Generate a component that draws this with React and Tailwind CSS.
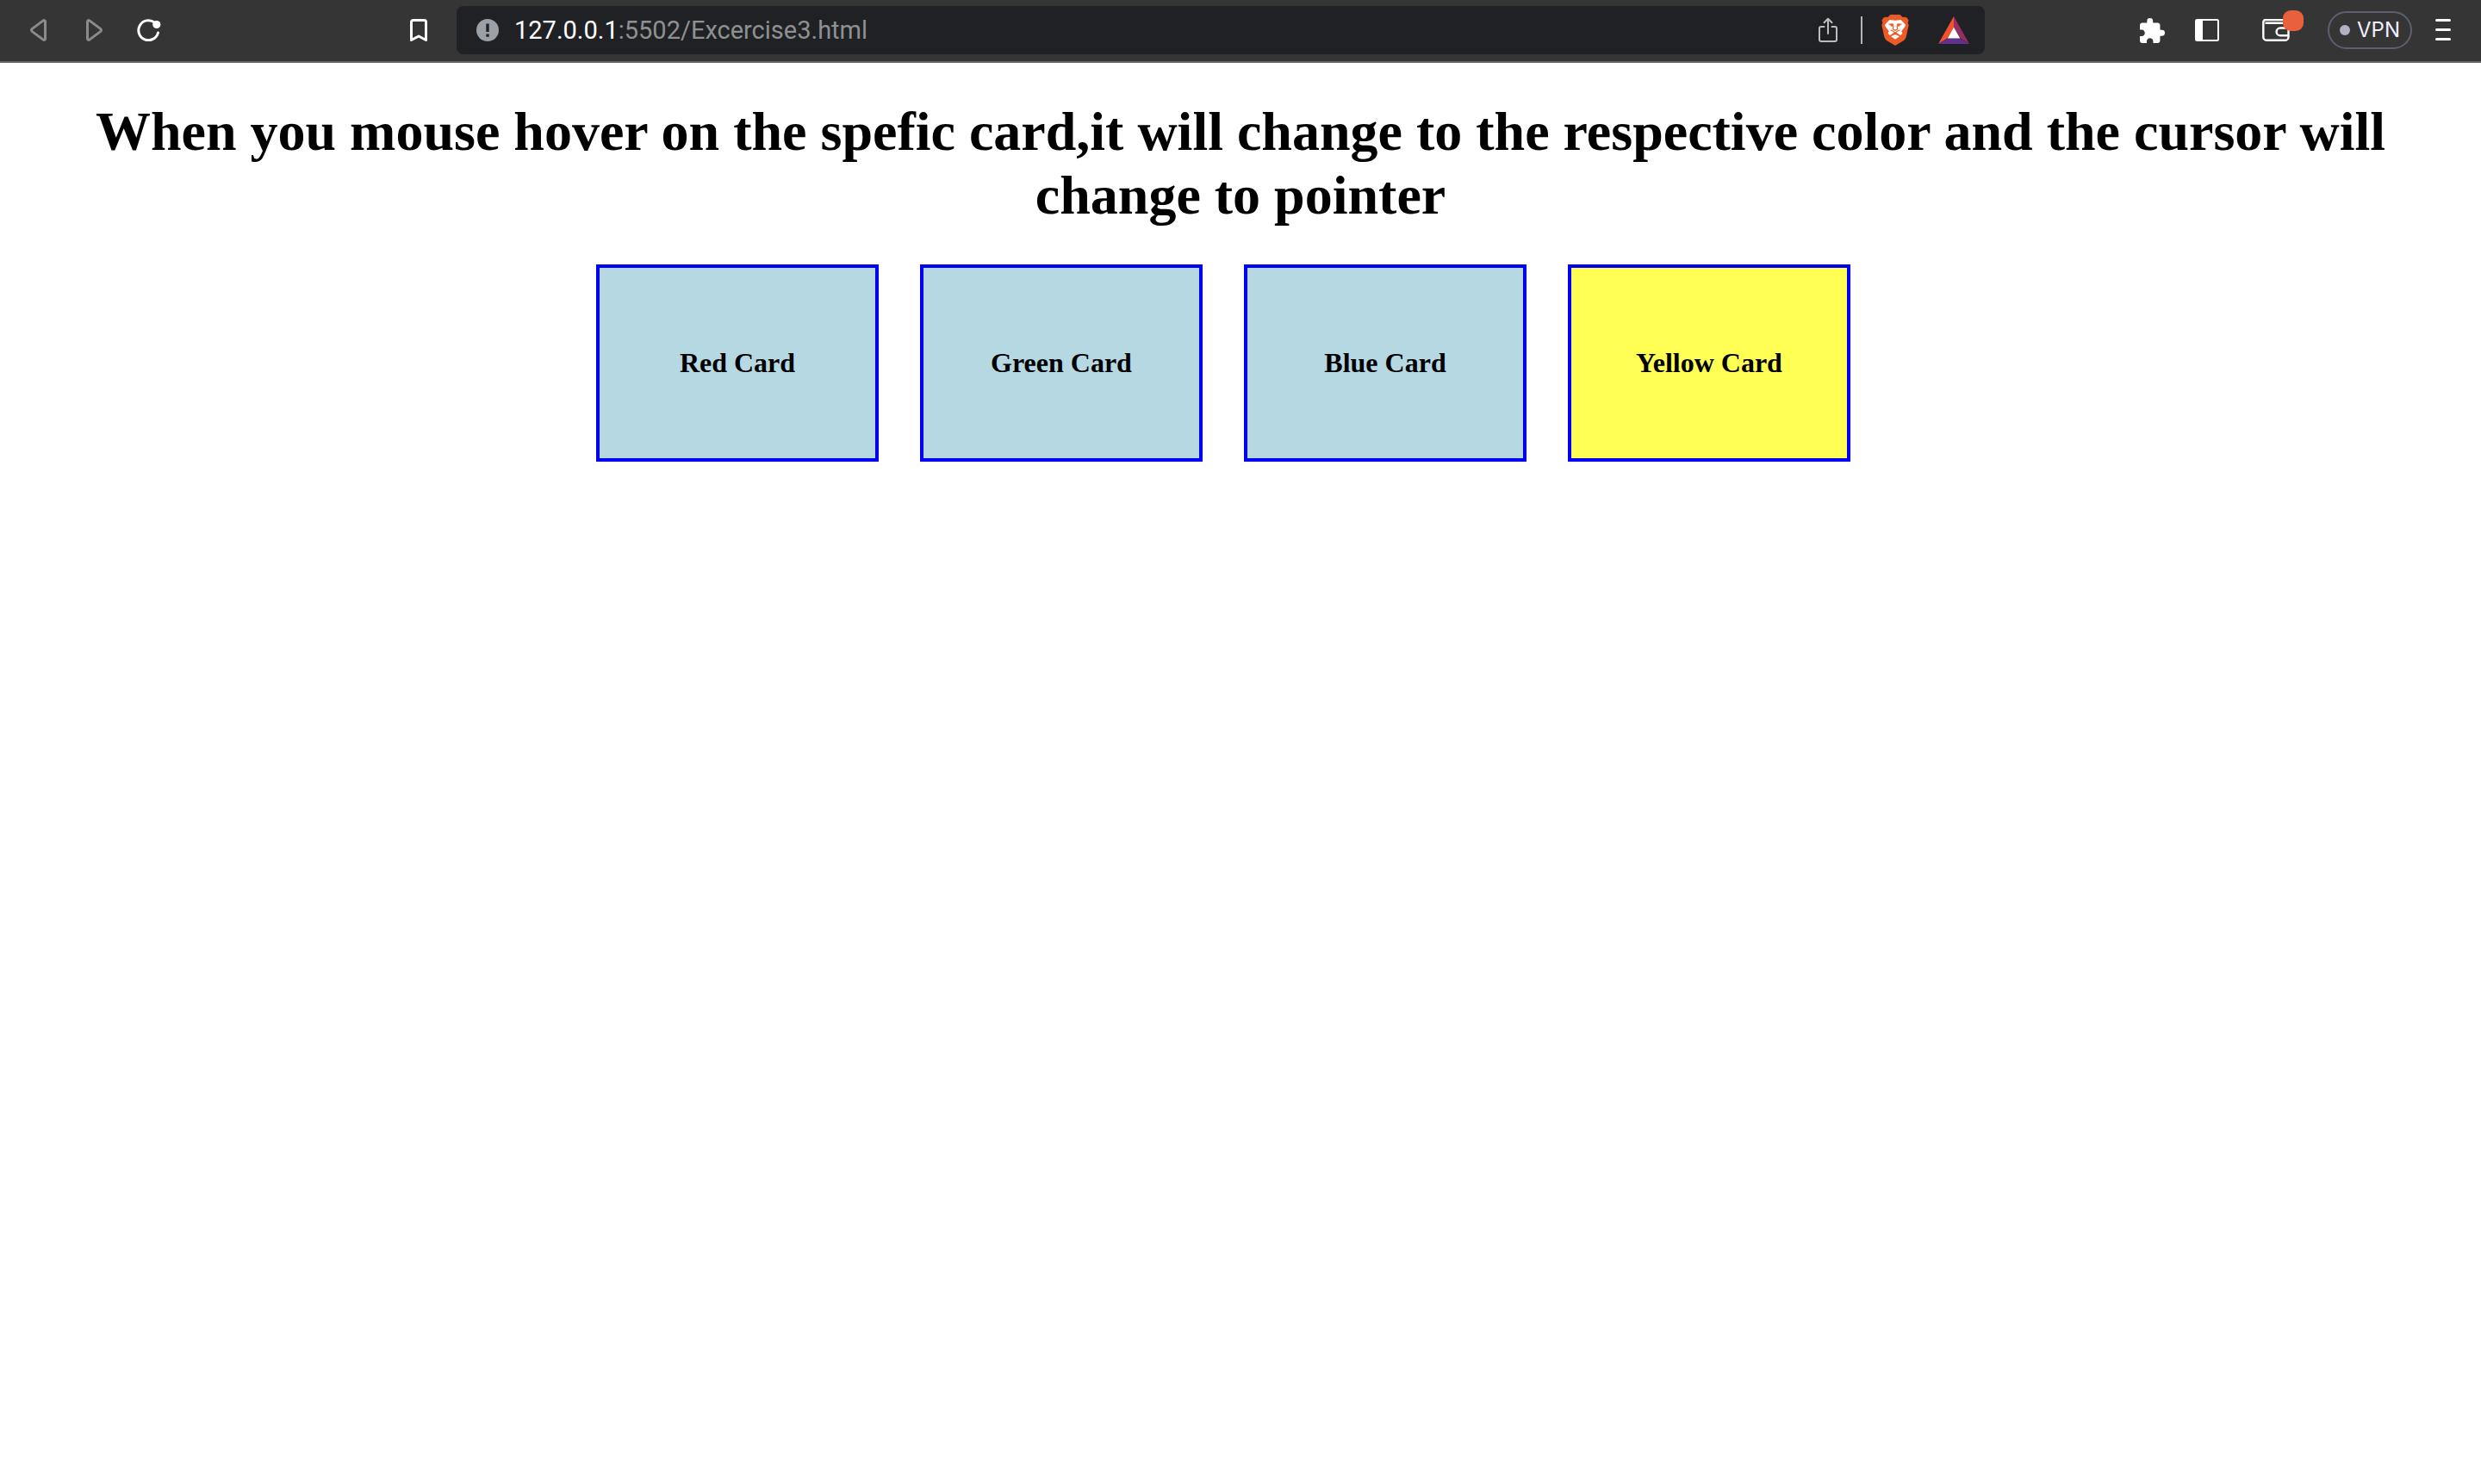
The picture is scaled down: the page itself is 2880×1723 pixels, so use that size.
const cards = [
  { name: "Red Card", tone: "bg-[#b6d8e3] hover:bg-red-500" },
  { name: "Green Card", tone: "bg-[#b6d8e3] hover:bg-green-500" },
  { name: "Blue Card", tone: "bg-[#b6d8e3] hover:bg-blue-500" },
  { name: "Yellow Card", tone: "bg-[#ffff54]" },
];

function BarButton({ label, className = "w-16", children }) {
  return (
    <button
      type="button"
      aria-label={label}
      className={"flex h-14 shrink-0 cursor-pointer items-center justify-center " + className}
    >
      {children}
    </button>
  );
}

function BackIcon() {
  return (
    <svg width="20" height="26" viewBox="0 0 20 26" fill="none" stroke="#8b8b8b" strokeWidth="3" strokeLinejoin="round">
      <path d="M17.5 3.2v19.6c0 1.400-1.200 2.100-2.300 1.300L2.400 14.600c-1.200-.9-1.200-2.300 0-3.200L15.200 1.900c1.100-.8 2.300-.1 2.300 1.300z" />
    </svg>
  );
}

function ForwardIcon() {
  return (
    <svg width="20" height="26" viewBox="0 0 20 26" fill="none" stroke="#8b8b8b" strokeWidth="3" strokeLinejoin="round">
      <path d="M2.500 3.200v19.600c0 1.400 1.200 2.100 2.300 1.300l12.800-9.500c1.200-.9 1.200-2.300 0-3.200L4.800 1.900C3.700 1.100 2.500 1.800 2.500 3.200z" />
    </svg>
  );
}

function ReloadIcon() {
  return (
    <svg width="28" height="26" viewBox="0 0 28 26" fill="none">
      <path d="M20.500 4.200A11.500 11.500 0 1 0 24.500 16" stroke="#fff" strokeWidth="3" strokeLinecap="round" />
      <circle cx="22.800" cy="6.500" r="4.600" fill="#fff" />
    </svg>
  );
}

function BookmarkIcon() {
  return (
    <svg width="20" height="26" viewBox="0 0 20 26" fill="none" stroke="#fff" strokeWidth="3" strokeLinejoin="round">
      <path d="M1.500 24.500V3.500a2 2 0 0 1 2-2h13a2 2 0 0 1 2 2v21L10 20z" />
    </svg>
  );
}

function InfoIcon() {
  return (
    <svg width="26" height="26" viewBox="0 0 26 26">
      <circle cx="13" cy="13" r="13" fill="#9aa0a6" />
      <path d="M11.300 5.500h3.400v9.500h-3.400zM11.300 17.500h3.400v3.200h-3.400z" fill="#202124" />
    </svg>
  );
}

function ShareIcon() {
  return (
    <svg width="22" height="30" viewBox="0 0 22 30" fill="none" stroke="#bdbdbd" strokeWidth="2" strokeLinecap="round" strokeLinejoin="round">
      <path d="M6.500 11H3a2 2 0 0 0-2 2v13a2 2 0 0 0 2 2h16a2 2 0 0 0 2-2V13a2 2 0 0 0-2-2h-3.500" />
      <path d="M11 19V2M6.500 6.300 11 1.800l4.500 4.500" />
    </svg>
  );
}

function LionIcon() {
  return (
    <svg width="32" height="36" viewBox="0 0 96 108">
      <path
        d="M31 0H65L74 9Q84 6 89 11L95 20L92 28L95 37L86 78Q84 86 78 90L48 108L18 90Q12 86 10 78L1 37L4 28L1 20L7 11Q12 6 22 9Z"
        fill="#ec5a25"
      />
      <path
        d="M28 18L48 20L68 18L84 35L82 42L70 57L73 66L66 72L54 64L48 61L42 64L30 72L23 66L26 57L14 42L12 35Z"
        fill="#fff"
      />
      <path d="M48 69L63 76L48 86L33 76Z" fill="#fff" />
      <path d="M23 32l17-1 3 4-3 5-5 2-2-4zM73 32l-17-1-3 4 3 5 5 2 2-4z" fill="#ec5a25" />
      <path d="M42 38l-2 12 8 5 8-5-2-12M32 54l8 3 8 7 8-7 8-3M48 62v7" fill="none" stroke="#ec5a25" strokeWidth="3.500" />
    </svg>
  );
}

function TriangleIcon() {
  return (
    <svg width="36" height="32" viewBox="0 0 36 32">
      <path d="M18 0v12.500L11 25 0 32z" fill="#f4512c" />
      <path d="M18 0v12.500L25 25l11 7z" fill="#962d64" />
      <path d="M0 32l11-6.500h14L36 32z" fill="#63308f" />
      <path d="M18 12.500L25.200 25.600H10.800z" fill="#fff" />
    </svg>
  );
}

function PuzzleIcon() {
  return (
    <svg width="29" height="29" viewBox="2 1 21 21" fill="#fff">
      <path d="M20.500 11H19V7c0-1.100-.9-2-2-2h-4V3.500a2.500 2.500 0 0 0-5 0V5H4c-1.100 0-1.990.9-1.990 2v3.800H3.500c1.490 0 2.700 1.210 2.700 2.700s-1.210 2.700-2.700 2.700H2V20c0 1.100.9 2 2 2h3.800v-1.500c0-1.490 1.210-2.700 2.700-2.700s2.700 1.210 2.700 2.700V22H17c1.100 0 2-.9 2-2v-4h1.500a2.500 2.500 0 0 0 0-5z" />
    </svg>
  );
}

function SidebarIcon() {
  return (
    <svg width="28" height="26" viewBox="0 0 28 26">
      <rect x="1" y="1" width="26" height="24" rx="1.500" fill="none" stroke="#fff" strokeWidth="2" />
      <path d="M1 1h8v24H1z" fill="#fff" />
    </svg>
  );
}

function WalletIcon() {
  return (
    <svg width="32" height="26" viewBox="0 0 32 26" fill="none" stroke="#fff" strokeWidth="2.400" strokeLinejoin="round">
      <path d="M28 4.500V3a2 2 0 0 0-2-2H4a2.700 2.700 0 0 0-2.700 2.700V21a3.800 3.800 0 0 0 3.800 3.800h21.600a3.800 3.800 0 0 0 3.800-3.800V8.600a3.800 3.800 0 0 0-3.800-3.800H3.500" />
      <path d="M30.500 10.500H21a4.300 4.300 0 0 0 0 8.800h9.500" />
    </svg>
  );
}

function MenuIcon() {
  return (
    <svg width="18" height="26" viewBox="0 0 18 26" stroke="#fff" strokeWidth="3" strokeLinecap="round">
      <path d="M1.500 1.500h15M1.500 12.500h15M1.500 23.500h15" />
    </svg>
  );
}

function Toolbar() {
  return (
    <header className="flex items-center border-b-2 border-[#636363] bg-[#353535] pt-[7px] pb-2">
      <nav className="flex pl-[13px]" aria-label="History">
        <BarButton label="Back"><BackIcon /></BarButton>
        <BarButton label="Forward"><ForwardIcon /></BarButton>
        <BarButton label="Reload"><ReloadIcon /></BarButton>
      </nav>

      <div className="ml-[249px] flex min-w-0 flex-1 items-center gap-3">
        <BarButton label="Bookmark this page"><BookmarkIcon /></BarButton>
        <div className="flex h-14 min-w-0 flex-1 items-center rounded-lg bg-[#202124] pr-[18px] pl-[23px]">
          <BarButton label="Site information" className="w-[26px]"><InfoIcon /></BarButton>
          <a
            href="#top"
            className="ml-[18px] flex-1 truncate font-[Roboto,sans-serif] text-[29px] leading-9 text-[#8f9092]"
          >
            <span className="text-white">127.0.0.1</span>:5502/Excercise3.html
          </a>
          <BarButton label="Share" className="w-[22px]"><ShareIcon /></BarButton>
          <span className="mr-[22px] ml-[27px] h-8 w-0.5 bg-[#b4b4b4]" />
          <BarButton label="Shields" className="w-8"><LionIcon /></BarButton>
          <BarButton label="Rewards" className="ml-[34px] w-9"><TriangleIcon /></BarButton>
        </div>
      </div>

      <div className="ml-[162px] flex items-center pr-3">
        <BarButton label="Extensions"><PuzzleIcon /></BarButton>
        <BarButton label="Sidebar"><SidebarIcon /></BarButton>
        <BarButton label="Wallet" className="ml-4 w-16">
          <span className="relative">
            <WalletIcon />
            <span className="absolute -top-2.5 -right-4 size-6 rounded-[9px] bg-[#e8603c]" />
          </span>
        </BarButton>
        <button
          type="button"
          className="ml-7 flex h-11 w-[98px] cursor-pointer items-center gap-2 rounded-full border-2 border-[#5e5f72] pl-3 font-[Inter,sans-serif] text-2xl text-[#f0f0ff]"
        >
          <span className="size-3 rounded-full bg-[#b0b0c4]" />
          VPN
        </button>
        <BarButton label="Menu" className="ml-1 w-16"><MenuIcon /></BarButton>
      </div>
    </header>
  );
}

export default function App() {
  return (
    <div id="top" className="min-h-screen bg-white font-['Liberation_Serif',serif] text-black">
      <Toolbar />
      <main className="px-4 pt-[43px] text-center">
        <h1 className="text-[64px] leading-[74px] font-bold">
          When you mouse hover on the spefic card,it will change to the respective color and the cursor will
          change to pointer
        </h1>
        <div className="mt-[43px] flex flex-wrap justify-center gap-12 pr-10">
          {cards.map((card) => (
            <h2
              key={card.name}
              className={"w-[328px] cursor-pointer border-4 border-[#0000f5] py-[92px] text-[32px] leading-[37px] font-bold " + card.tone}
            >
              {card.name}
            </h2>
          ))}
        </div>
      </main>
    </div>
  );
}
